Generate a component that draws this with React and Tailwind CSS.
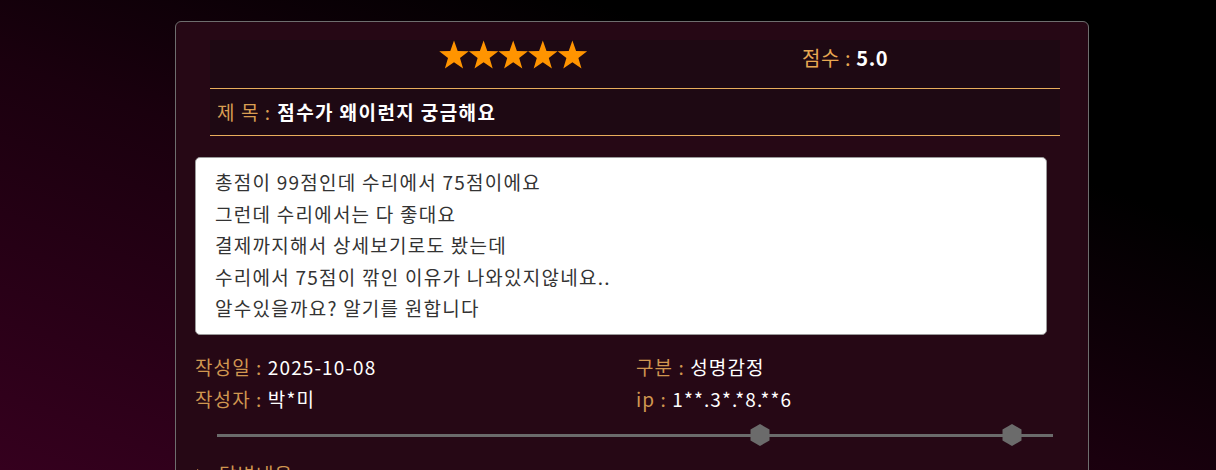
import React from "react";

const font = { fontFamily: '"Noto Sans CJK KR", "Noto Sans", sans-serif' };

function Stars() {
  const star = (cx) => {
    const pts = [];
    for (let i = 0; i < 10; i++) {
      const r = i % 2 === 0 ? 15.5 : 6.3;
      const a = -Math.PI / 2 + (i * Math.PI) / 5;
      pts.push(`${(cx + r * Math.cos(a)).toFixed(2)},${(16 + r * Math.sin(a)).toFixed(2)}`);
    }
    return pts.join(" ");
  };
  return (
    <svg width="150" height="32" viewBox="0 0 150 32" className="block">
      {[0, 1, 2, 3, 4].map((i) => (
        <polygon key={i} points={star(15 + i * 29.6)} fill="#ff9400" />
      ))}
    </svg>
  );
}

function Hex() {
  return (
    <svg width="20" height="22" viewBox="0 0 20 22" className="block">
      <polygon points="10,0 19.5,5.5 19.5,16.5 10,22 0.5,16.5 0.5,5.5" fill="#6b6b6b" />
    </svg>
  );
}

export default function App() {
  return (
    <div
      className="w-full h-[470px] overflow-hidden bg-[linear-gradient(20deg,#35001e_0%,#1a000e_45%,#000000_75%)]"
      style={font}
    >
      <div className="ml-[175px] mt-[21px] w-[914px] h-[500px] rounded-md border border-[#6e6e6e] bg-[#260815]">
        {/* header box */}
        <div className="ml-[34px] mt-[18px] w-[850px] bg-[#1e0913]">
          <div className="h-[49px] flex items-start border-b border-[#e8ad5c]">
            <div className="ml-[229px] mt-[0px]">
              <Stars />
            </div>
            <div className="ml-[213px] mt-[5px] text-[20px] leading-[26px] tracking-[0.6px]">
              <span className="text-[#e8a852]">점수 : </span>
              <span className="text-white font-bold">5.0</span>
            </div>
          </div>
          <div className="h-[47px] flex items-center border-b border-[#e8ad5c] pl-[7px] text-[19px] tracking-[1.1px]">
            <span className="text-[#d99d52]">제 목 :</span>
            <span className="text-white font-bold ml-[6px] tracking-[1.4px]">점수가 왜이런지 궁금해요</span>
          </div>
        </div>

        {/* content box */}
        <div className="ml-[19px] mt-[21px] w-[852px] h-[178px] rounded-[5px] border border-[#9a9a9a] bg-white pl-[19px] pt-[8px]">
          <div className="text-[19px] leading-[31.5px] tracking-[1.25px] text-[#333333]">
            <div>총점이 99점인데 수리에서 75점이에요</div>
            <div>그런데 수리에서는 다 좋대요</div>
            <div>결제까지해서 상세보기로도 봤는데</div>
            <div>수리에서 75점이 깎인 이유가 나와있지않네요..</div>
            <div>알수있을까요? 알기를 원합니다</div>
          </div>
        </div>

        {/* meta */}
        <div className="ml-[19px] mt-[16px] grid grid-cols-[441px_1fr] text-[19px] leading-[32px] tracking-[1.1px]">
          <div>
            <span className="text-[#d09650]">작성일 : </span>
            <span className="text-white">2025-10-08</span>
          </div>
          <div>
            <span className="text-[#d09650]">구분 : </span>
            <span className="text-white">성명감정</span>
          </div>
          <div>
            <span className="text-[#d09650]">작성자 : </span>
            <span className="text-white">박*미</span>
          </div>
          <div>
            <span className="text-[#d09650]">ip : </span>
            <span className="text-white">1**.3*.*8.**6</span>
          </div>
        </div>

        {/* slider */}
        <div className="relative ml-[41px] mt-[9px] w-[836px] h-[22px] flex items-center">
          <div className="w-full h-[3px] bg-[#6b6b6b]" />
          <div className="absolute left-[533px] top-0">
            <Hex />
          </div>
          <div className="absolute left-[785px] top-0">
            <Hex />
          </div>
        </div>

        {/* answer */}
        <div className="ml-[21px] mt-[12px] flex items-center gap-[14px] text-[19px] leading-[32px] tracking-[1px]">
          <span className="block w-0 h-0 border-y-[5px] border-y-transparent border-l-[8px] border-l-[#d09650]" />
          <span className="text-[#d09650]">답변내용</span>
        </div>
      </div>
    </div>
  );
}
